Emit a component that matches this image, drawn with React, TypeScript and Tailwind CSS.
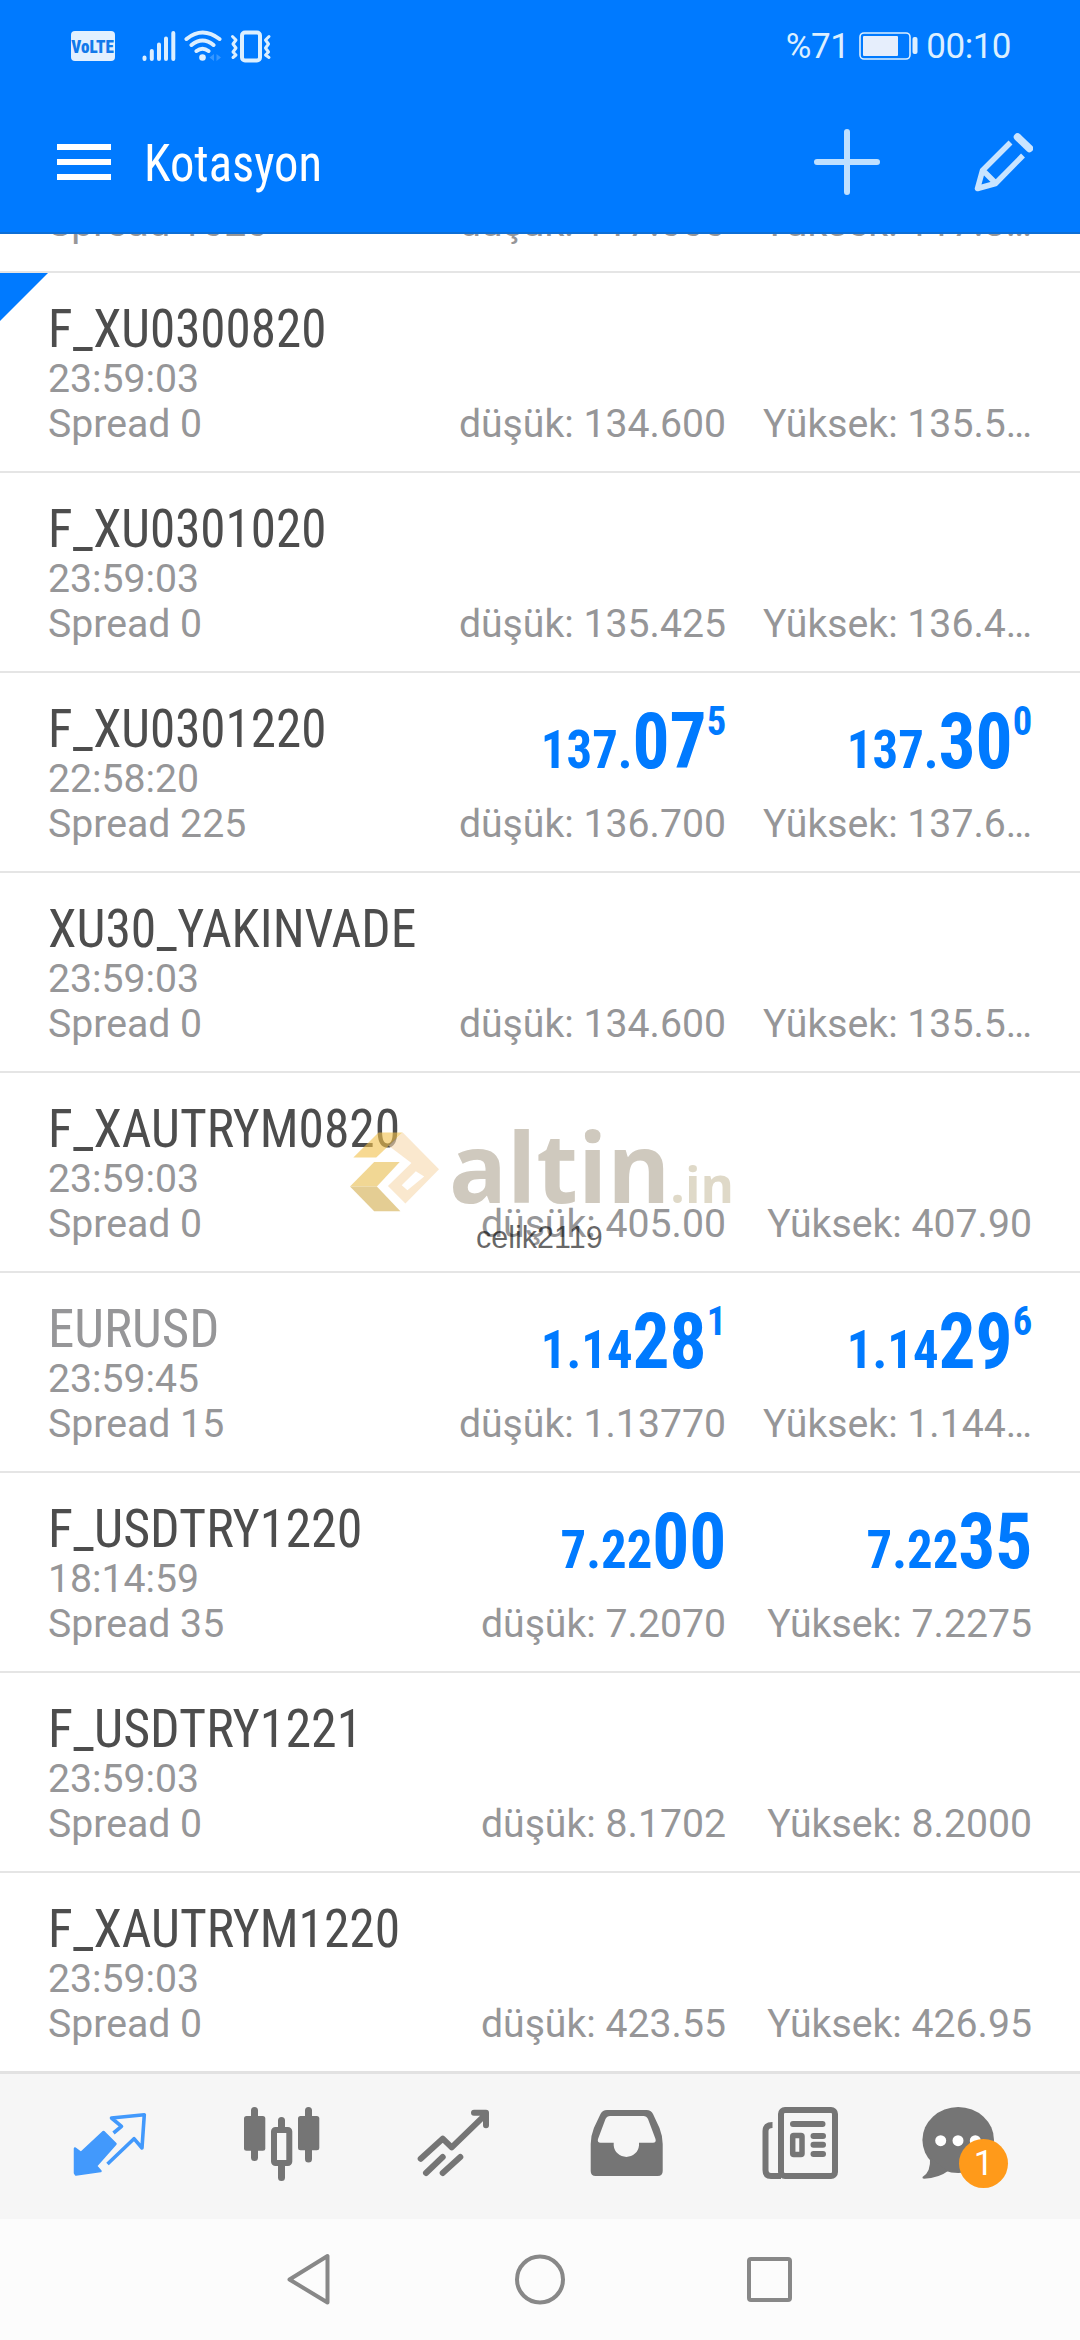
import type { ReactNode } from 'react'
import clsx from 'clsx'

interface Price { small: string; big: string; sup?: string }
interface Quote { symbol: string; fit: string; time: string; spread: string; low: string; high: string; bid?: Price; ask?: Price; muted?: boolean; marked?: boolean; watermark?: boolean }

const QUOTES: Quote[] = [
  { symbol: 'F_XU0300820', fit: 'scale-x-[0.945]', time: '23:59:03', spread: '0', low: '134.600', high: '135.5…', marked: true },
  { symbol: 'F_XU0301020', fit: 'scale-x-[0.945]', time: '23:59:03', spread: '0', low: '135.425', high: '136.4…' },
  { symbol: 'F_XU0301220', fit: 'scale-x-[0.945]', time: '22:58:20', spread: '225', low: '136.700', high: '137.6…', bid: { small: '137.', big: '07', sup: '5' }, ask: { small: '137.', big: '30', sup: '0' } },
  { symbol: 'XU30_YAKINVADE', fit: 'scale-x-[0.955]', time: '23:59:03', spread: '0', low: '134.600', high: '135.5…' },
  { symbol: 'F_XAUTRYM0820', fit: 'scale-x-[0.952]', time: '23:59:03', spread: '0', low: '405.00', high: '407.90', watermark: true },
  { symbol: 'EURUSD', fit: 'scale-x-[0.98]', time: '23:59:45', spread: '15', low: '1.13770', high: '1.144…', bid: { small: '1.14', big: '28', sup: '1' }, ask: { small: '1.14', big: '29', sup: '6' }, muted: true },
  { symbol: 'F_USDTRY1220', fit: 'scale-x-[0.962]', time: '18:14:59', spread: '35', low: '7.2070', high: '7.2275', bid: { small: '7.22', big: '00' }, ask: { small: '7.22', big: '35' } },
  { symbol: 'F_USDTRY1221', fit: 'scale-x-[0.962]', time: '23:59:03', spread: '0', low: '8.1702', high: '8.2000' },
  { symbol: 'F_XAUTRYM1220', fit: 'scale-x-[0.952]', time: '23:59:03', spread: '0', low: '423.55', high: '426.95' },
]

function StatusBar() {
  return (
    <div className="flex h-[92px] items-center justify-between pl-[71px] pr-[69px] text-[#dcefff]">
      <div className="flex items-center">
        <span className="flex h-[30px] w-[44px] items-center justify-center rounded-[4px] bg-[#e2f0ff]">
          <span className="font-['Roboto_Condensed'] text-[19px] font-black leading-none text-[#1279ea] scale-x-90">VoLTE</span>
        </span>
        <svg className="ml-[27px]" width="34" height="32" viewBox="0 0 34 32" fill="none" stroke="currentColor" strokeWidth="4" strokeLinecap="round">
          <path d="M2.5 27.5V29M9.8 21V29M17 14.5V29M24 8.5V29M31.3 3V29" />
        </svg>
        <svg className="ml-[8px]" width="38" height="32" viewBox="0 0 38 32" fill="none" stroke="currentColor" strokeWidth="4" strokeLinecap="round">
          <path d="M2.5 9Q18.5 -4 35.5 9M7.5 15Q18.5 6 29.5 15M12.5 21Q18.5 16.5 24.5 21" />
          <circle cx="18.5" cy="27.5" r="3.3" fill="currentColor" stroke="none" />
          <path d="M30 24V31L25.5 27.5ZM32.5 24V31L37 27.5Z" fill="currentColor" stroke="none" opacity="0.25" />
        </svg>
        <svg className="ml-[8px]" width="42" height="33" viewBox="0 0 42 33" fill="none" stroke="currentColor" strokeWidth="4" strokeLinecap="round" strokeLinejoin="round">
          <rect x="12" y="2.5" width="18" height="28" rx="3" />
          <path d="M2.5 6.5L6 10L3 14L6 18L3 22L6 25L3 27.5" strokeWidth="3" />
          <path d="M39 6.5L35.5 10L38.5 14L35.5 18L38.5 22L35.5 25L39 27.5" strokeWidth="3" />
        </svg>
      </div>
      <div className="flex items-center text-[35px] leading-none">
        <span className="tracking-[-0.5px]">%71</span>
        <svg className="ml-[10px] mr-[7px]" width="60" height="28" viewBox="0 0 60 28">
          <rect x="1" y="1" width="50" height="26" rx="4" fill="none" stroke="currentColor" strokeWidth="1.6" />
          <rect x="4" y="4" width="35" height="20" rx="1" fill="#e6eefc" />
          <rect x="53.5" y="5" width="5" height="17" rx="2" fill="currentColor" />
        </svg>
        <span className="tracking-[-0.5px]">00:10</span>
      </div>
    </div>
  )
}

function Header() {
  return (
    <header className="h-[234px] shrink-0 border-b-2 border-[#0d6fd6] bg-[#007aff]">
      <StatusBar />
      <div className="flex h-[140px] items-center pl-[57px] pr-[47px]">
        <div className="flex w-[54px] flex-col gap-[9px]">
          <span className="h-[6px] bg-white" />
          <span className="h-[6px] bg-white" />
          <span className="h-[6px] bg-white" />
        </div>
        <h1 className="ml-[33px] origin-left scale-x-[0.935] pt-[4px] font-['Roboto_Condensed'] text-[52px] leading-none font-[450] text-white">Kotasyon</h1>
        <svg className="ml-auto" width="68" height="68" viewBox="0 0 68 68" stroke="#bfe0ff" strokeWidth="6" strokeLinecap="round">
          <path d="M4 34H64M34 4V64" />
        </svg>
        <svg className="ml-[90px]" width="62" height="62" viewBox="0 0 62 62" fill="none" stroke="#c9e4ff" strokeWidth="5.5" strokeLinejoin="round">
          <path d="M39.5 11.5L11.5 39.5L6.5 57.5L24.5 52.5L52 24.5M12 39.5L24.5 52" />
          <path d="M46.5 6L58.5 17.5" strokeWidth="7.5" strokeLinecap="round" />
        </svg>
      </div>
    </header>
  )
}

function PriceTag({ price }: { price: Price }) {
  return (
    <p className="origin-right scale-x-[0.94] pt-px font-['Roboto_Condensed'] text-[54px] leading-none font-bold whitespace-nowrap text-[#007aff]">
      {price.small}
      <span className="text-[78px] leading-none">{price.big}</span>
      {price.sup && <span className="relative -top-[33px] text-[41px] leading-none font-bold">{price.sup}</span>}
    </p>
  )
}

function PriceColumn({ className, label, value, price }: { className: string; label: string; value: string; price?: Price }) {
  return (
    <div className={clsx('flex shrink-0 flex-col items-end', className)}>
      <div className="h-[100px]">{price && <PriceTag price={price} />}</div>
      <p className="text-[39.2px] leading-[45px] whitespace-nowrap">{label}: {value}</p>
    </div>
  )
}

function Watermark() {
  return (
    <div className="absolute top-[33px] left-[350px] h-[150px] w-[390px]">
      <div className="flex">
        <svg className="mt-[25px] opacity-60" width="89" height="81" viewBox="150 215 265 240">
          <path d="M160 293L235 219H307L228 293Z" fill="#f2c14a" />
          <path d="M307 219L415 328L315 430L263 378L333 310L265 258ZM346 334L304 376L321 391L371 350Z" fill="#f8d9ae" fillRule="evenodd" />
          <path d="M150 380L222 307H298L230 380Z" fill="#e9bd4e" />
          <path d="M150 380H230L300 453H222Z" fill="#d3ad4c" />
        </svg>
        <p className="ml-[10px] font-['Open_Sans'] text-[96px] leading-[120px] font-bold whitespace-nowrap text-[#cfc9be]">
          altin<span className="text-[51px] text-[#dfd9c8]">.in</span>
        </p>
      </div>
      <p className="absolute top-[114px] left-[126px] font-['Liberation_Sans'] text-[30.5px] leading-[34px] text-black/60">celik2119</p>
    </div>
  )
}

function QuoteRow({ quote }: { quote: Quote }) {
  return (
    <li className="relative flex h-[200px] shrink-0 border-b-2 border-[#e5e5e5] pt-[29px] pr-[48px] pl-[48px] text-[#969698]">
      {quote.marked && <span className="absolute top-0 left-0 size-[48px] bg-[#007aff] [clip-path:polygon(0_0,100%_0,0_100%)]" />}
      <div className="min-w-0 flex-1">
        <p className={clsx("h-[55px] origin-left font-['Roboto_Condensed'] text-[54px] leading-[54px] whitespace-nowrap", quote.fit, quote.muted ? 'text-[#969698]' : 'text-[#4d4d4d]')}>
          {quote.symbol}
        </p>
        <p className="text-[39.2px] leading-[45px]">{quote.time}</p>
        <p className="text-[39.2px] leading-[45px]">Spread {quote.spread}</p>
      </div>
      <PriceColumn className="w-[280px]" label="düşük" value={quote.low} price={quote.bid} />
      <PriceColumn className="w-[306px]" label="Yüksek" value={quote.high} price={quote.ask} />
      {quote.watermark && <Watermark />}
    </li>
  )
}

function TabIcon({ children, active }: { children: ReactNode; active?: boolean }) {
  return (
    <svg className={active ? 'text-[#4299fc]' : 'text-[#757575]'} width="96" height="96" viewBox="0 0 96 96" fill="none" stroke="currentColor" strokeLinecap="round" strokeLinejoin="round">
      {children}
    </svg>
  )
}

function TabBar() {
  return (
    <nav className="grid h-[148px] shrink-0 grid-cols-6 justify-items-center border-t-3 border-[#e2e2e2] bg-[#f6f6f6] px-[24px] pt-[22px]">
      <TabIcon active>
        <path d="M13 52.5L19 57L41.5 36L53.5 48L34 70L38.5 75L14 78.5L13 77Z" fill="currentColor" strokeWidth="2.5" />
        <path d="M51.5 37L59.5 30.3L49.5 22L82.3 18.7L80 52L72 42.7L45.5 68" strokeWidth="3.6" strokeLinecap="butt" />
      </TabIcon>
      <TabIcon>
        <path d="M20.5 14.5V61.5M47.5 24.5V34M47.5 67V81.5M74.5 14.5V63" strokeWidth="7" />
        <rect x="10" y="20" width="21.3" height="34.7" rx="2.5" fill="currentColor" stroke="none" />
        <rect x="64" y="20" width="21.3" height="34.3" rx="2.5" fill="currentColor" stroke="none" />
        <rect x="40" y="34" width="15.3" height="33" rx="1.5" fill="#f6f6f6" strokeWidth="6" />
      </TabIcon>
      <TabIcon>
        <path d="M14.7 62.7L36.7 42.7L45.7 51.3L79.7 18.3M68 16.7H80V29.3" strokeWidth="6" />
        <path d="M20 77L36.7 61M36.7 77L54.3 61" strokeWidth="6" />
      </TabIcon>
      <TabIcon>
        <path
          fill="currentColor"
          stroke="none"
          fillRule="evenodd"
          d="M29 14H68.5Q73 14 75 18L81.5 32Q84.7 40 84.7 48V75Q84.7 80 79.7 80H17.7Q12.7 80 12.7 75V48Q12.7 40 15.9 32L22.5 18Q24.5 14 29 14ZM32 20H65.5Q68.5 20 70 23L77.5 43Q78.5 46.7 75 46.7H61V49.5A12.7 12.5 0 0 1 35.7 49.5V46.7H22.5Q19 46.7 20 43L27.5 23Q29 20 32 20Z"
        />
      </TabIcon>
      <TabIcon>
        <rect x="31" y="14" width="54" height="66" rx="4" strokeWidth="6" />
        <path d="M22.5 29Q15.5 29 15.5 35V74Q15.5 80 21 80H31" strokeWidth="6" strokeLinecap="butt" />
        <path d="M43 28H72.5M63.5 40H73M63.5 48.7H73M63.5 58H73" strokeWidth="6" />
        <rect x="42.7" y="39.5" width="9.3" height="19" rx="1" strokeWidth="5.5" />
      </TabIcon>
      <div className="relative w-[96px]">
        <TabIcon>
          <g fill="currentColor" stroke="none">
            <ellipse cx="36.2" cy="44" rx="35.8" ry="33" />
            <path d="M8 62Q9 76 0.5 81Q0 82.5 2 82.7Q17 82 26 75Z" />
          </g>
          <g fill="#fff" stroke="none">
            <circle cx="18.7" cy="44.7" r="5.5" />
            <circle cx="36" cy="44.7" r="5.5" />
            <circle cx="53.3" cy="44.7" r="5.5" />
          </g>
        </TabIcon>
        <span className="absolute top-[43px] left-[37px] flex size-[49px] items-center justify-center rounded-full bg-[#ff9a1a] text-[35px] leading-none text-white">1</span>
      </div>
    </nav>
  )
}

function SystemNav() {
  return (
    <div className="flex h-[121px] shrink-0 items-center justify-center gap-[170px] bg-[#fcfcfc] pb-[2px] text-[#888]">
      <svg width="60" height="60" viewBox="0 0 60 60" fill="none" stroke="currentColor" strokeWidth="4" strokeLinejoin="round">
        <path d="M9.5 30.5L47.5 7V53.5Z" />
      </svg>
      <svg width="60" height="60" viewBox="0 0 60 60" fill="none" stroke="currentColor" strokeWidth="4">
        <circle cx="30" cy="30.5" r="23" />
      </svg>
      <svg width="60" height="60" viewBox="0 0 60 60" fill="none" stroke="currentColor" strokeWidth="4">
        <rect x="9" y="10" width="41" height="41" rx="2" />
      </svg>
    </div>
  )
}

export default function App() {
  return (
    <div className="flex h-[2340px] w-[1080px] flex-col overflow-hidden bg-white font-['Roboto',sans-serif]">
      <Header />
      <main className="flex h-[1837px] shrink-0 flex-col overflow-hidden">
        {/* tail of the row scrolled under the header */}
        <div className="flex h-[39px] shrink-0 items-end overflow-hidden border-b-2 border-[#e5e5e5] px-[48px] pb-[25px] text-[39.2px] leading-[45px] whitespace-nowrap text-[#969698]">
          <p className="flex-1">Spread 1020</p>
          <p className="w-[280px] text-right">düşük: 117.000</p>
          <p className="w-[306px] text-right">Yüksek: 117.3…</p>
        </div>
        <ul className="flex flex-col">
          {QUOTES.map(q => <QuoteRow key={q.symbol} quote={q} />)}
        </ul>
      </main>
      <TabBar />
      <SystemNav />
    </div>
  )
}
